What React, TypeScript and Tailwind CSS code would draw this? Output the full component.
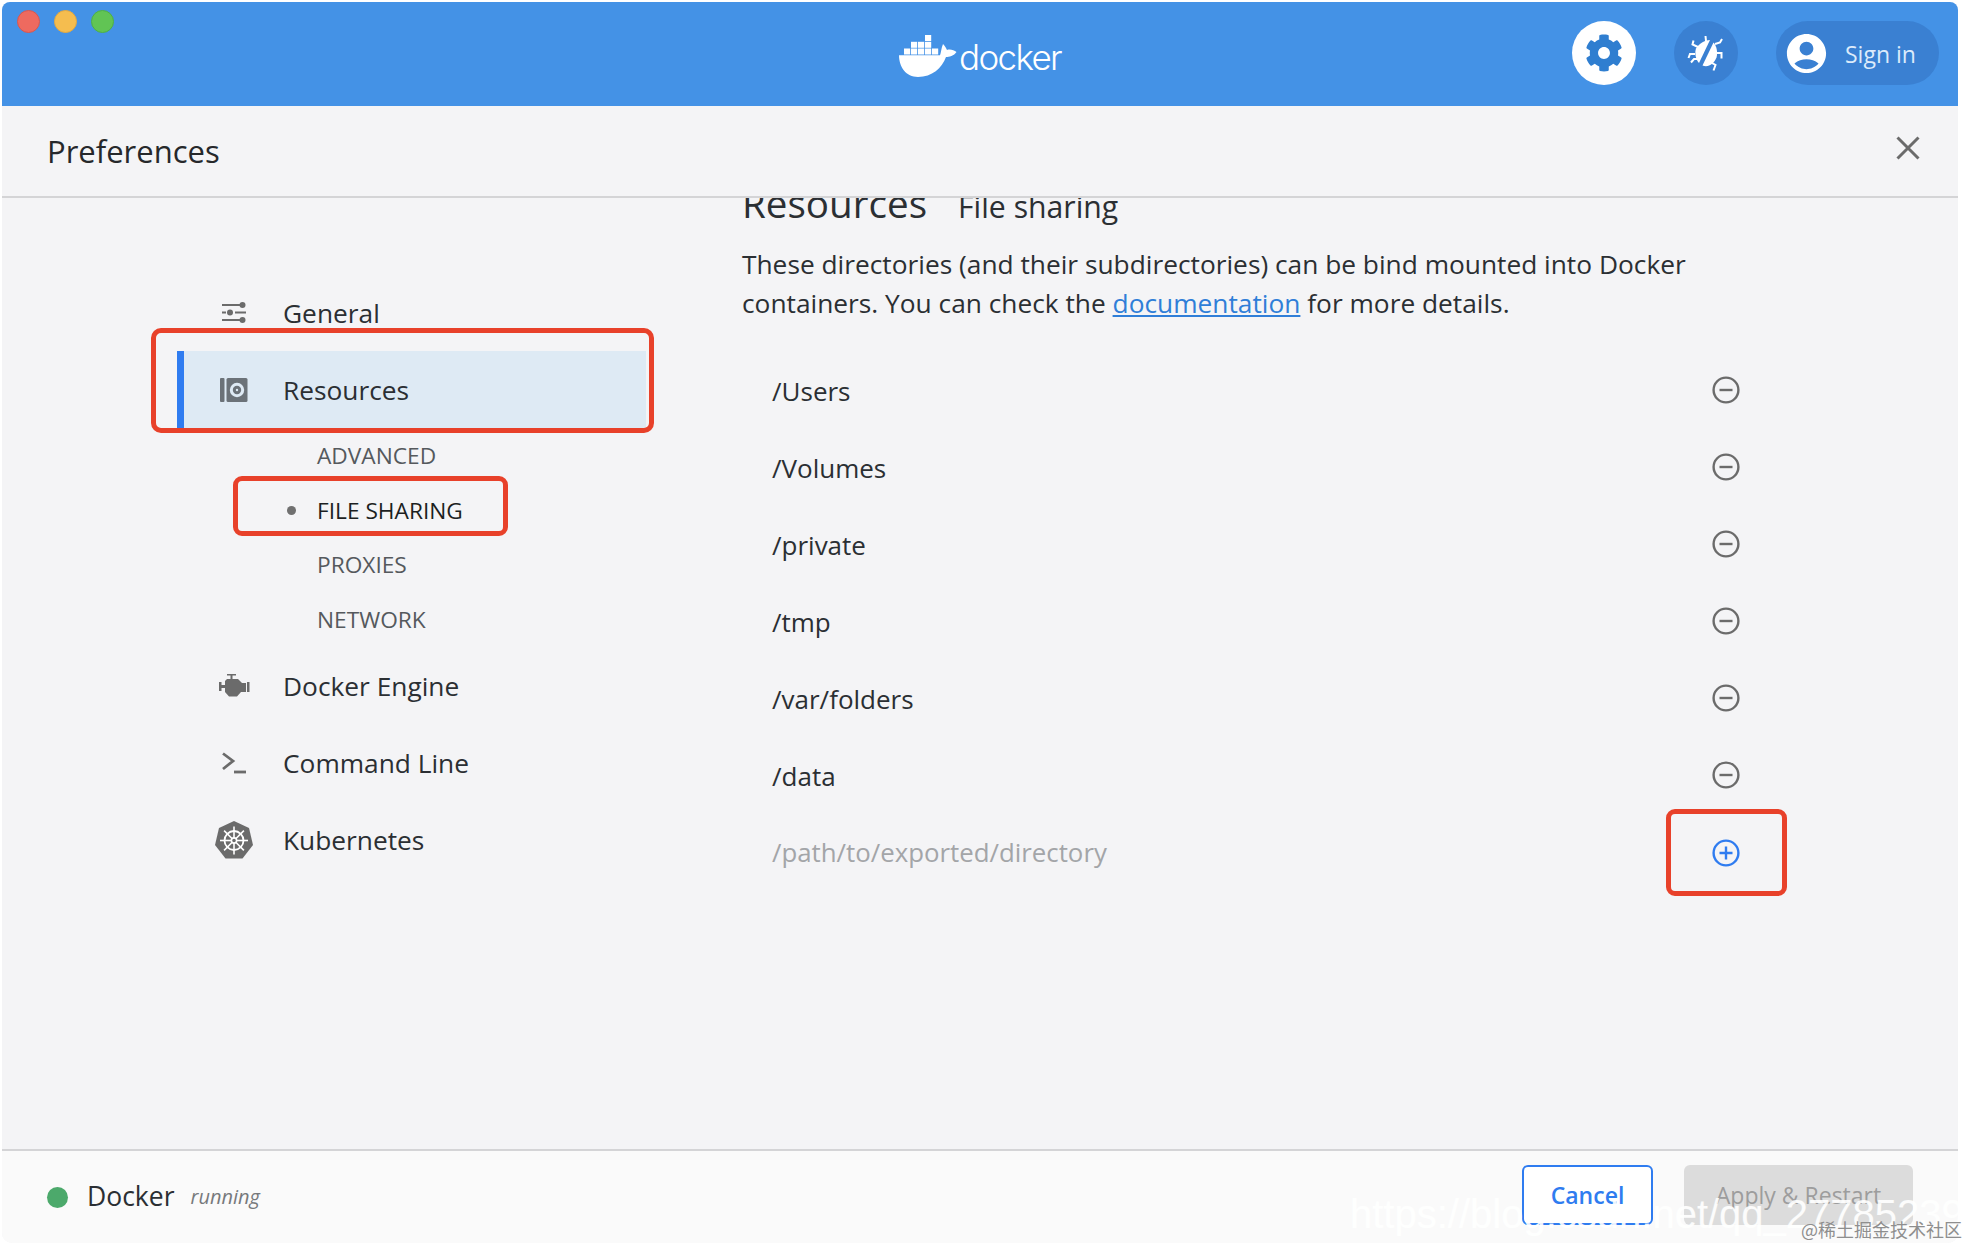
import { FaCog } from 'react-icons/fa'
import { MdAccountCircle } from 'react-icons/md'

const paths = ['/Users', '/Volumes', '/private', '/tmp', '/var/folders', '/data']

function Whale() {
  const blocks = [
    [27, 0],
    [13, 6.8],
    [20, 6.8],
    [27, 6.8],
    [6, 13.5],
    [13, 13.5],
    [20, 13.5],
    [27, 13.5],
    [34, 13.5],
  ]
  return (
    <svg className="w-[59px] h-[42px]" viewBox="0 0 59 42" fill="#fff">
      {blocks.map(([x, y]) => (
        <rect key={`${x}-${y}`} x={x} y={y} width="6.2" height="6" />
      ))}
      <path d="M1 20.3H42C43 18 43 14 45 9C47 11 48 13 49 15C52 14 56 15 58.5 17C56 21 51 22 48 22C44 33 34 42 20 42C8 42 1 32 1 20.3Z" />
    </svg>
  )
}

function BugIcon() {
  return (
    <svg className="w-[40px] h-[40px]" viewBox="0 0 40 40" fill="#fff" stroke="none">
      <path d="M24 7L13 30C9.5 26 8.5 20 10 15.5C13 10.5 18.5 7.5 24 7Z" />
      <path d="M27.5 9.5L16.5 32.5C22 35 28 31 30.5 24.5C32 19 30.5 13 27.5 9.5Z" />
      <path
        d="M20 8L19.5 3M12 14L6.5 11.5L7.5 7.5M9 21L4 21L2.5 25M12 26L8 26L5 29.5M29 11L34 9.5L36 6M31 20L35.5 20L35.5 25.5M26 30L29.5 32L27.5 37.5"
        fill="none"
        stroke="#fff"
        strokeWidth="2"
      />
    </svg>
  )
}

function SlidersIcon() {
  return (
    <svg className="w-[26px] h-[23px]" viewBox="0 0 26 23" fill="#6b6b6b" stroke="#6b6b6b" strokeWidth="2">
      <path d="M1 4H19M1 11.5H5M14 11.5H25M1 19H19" fill="none" />
      <circle cx="21.5" cy="4" r="3" stroke="none" />
      <circle cx="9" cy="11.5" r="3" stroke="none" />
      <circle cx="21.5" cy="19" r="3" stroke="none" />
    </svg>
  )
}

function DiskIcon() {
  return (
    <svg className="w-[28px] h-[24px]" viewBox="0 0 28 24">
      <rect x="0" y="0" width="4.5" height="24" rx="1" fill="#6b7278" />
      <rect x="6.5" y="0" width="21" height="24" rx="1.5" fill="#6b7278" />
      <circle cx="17" cy="12" r="7.2" fill="#deeaf4" />
      <circle cx="17" cy="12" r="4.2" fill="#6b7278" />
      <circle cx="17" cy="12" r="1.2" fill="#deeaf4" />
    </svg>
  )
}

function EngineIcon() {
  return (
    <svg className="w-[31px] h-[23px]" viewBox="0 0 31 23" fill="#6b6b6b">
      <path d="M8 0H17V1.6H13.5V5H19L23 9H27V18H22L18 22.5H10L6 18V14H2.5V17H0V8H2.5V11H6V7L8 5H11.5V1.6H8Z" />
      <rect x="28" y="8" width="2.5" height="10" />
    </svg>
  )
}

function PromptIcon() {
  return (
    <svg className="w-[24px] h-[22px]" viewBox="0 0 24 22" fill="none" stroke="#6b6b6b" strokeWidth="2.8">
      <path d="M1 1.5L11 9L1 17" />
      <path d="M12 20H24" />
    </svg>
  )
}

function KubeIcon() {
  const spokes = [0, 45, 90, 135, 180, 225, 270, 315]
  return (
    <svg className="w-[40px] h-[38px]" viewBox="0 0 40 38">
      <path d="M20 0L35 7L39 24L28.5 37.5H11.5L1 24L5 7Z" fill="#6b6b6b" />
      <g fill="none" stroke="#fff">
        <circle cx="20" cy="19.5" r="9.5" strokeWidth="1.8" />
        <circle cx="20" cy="19.5" r="2.6" strokeWidth="1.6" />
        {spokes.map((a) => (
          <path key={a} d="M20 17V5.5" strokeWidth="1.6" transform={`rotate(${a} 20 19.5)`} />
        ))}
      </g>
    </svg>
  )
}

function SideItem({ icon, label }: { icon: React.ReactNode; label: string }) {
  return (
    <div className="h-[77px] flex items-center">
      <div className="w-[40px] ml-[212px] flex justify-center">{icon}</div>
      <span className="ml-[29px] pt-[2px] text-[26.3px] text-[#2b2f33]">{label}</span>
    </div>
  )
}

function SubItem({ label, active }: { label: string; active?: boolean }) {
  return (
    <div className="h-[54.5px] flex items-center pl-[315px] relative">
      {active && <span className="absolute left-[285px] w-[9px] h-[9px] rounded-full bg-[#707070]" />}
      <span className={`text-[22.7px] ${active ? 'text-[#1c1f22]' : 'text-[#55595d]'}`}>{label}</span>
    </div>
  )
}

export default function App() {
  return (
    <div className="w-[1968px] h-[1246px] bg-white font-['Open_Sans',sans-serif] overflow-hidden relative">
      <div className="ml-[2px] mt-[2px] w-[1956px] h-[1241px] flex flex-col rounded-t-[8px] rounded-b-[10px] overflow-hidden bg-[#f4f4f6]">
        <header className="h-[104px] shrink-0 bg-[#4492e6] grid grid-cols-[1fr_auto_1fr] items-center">
          <div className="flex gap-[14px] pl-[15px] self-start pt-[8px]">
            <span className="w-[23px] h-[23px] rounded-full bg-[#ee6a5f] border border-[#d9564e]" />
            <span className="w-[23px] h-[23px] rounded-full bg-[#f5bd4f] border border-[#e6a93d]" />
            <span className="w-[23px] h-[23px] rounded-full bg-[#61c454] border border-[#4fb044]" />
          </div>
          <div className="flex items-end gap-[2px] pt-[4px] pr-[1px]">
            <Whale />
            <span className="text-[35px] leading-[40px] text-white font-['Inter',sans-serif] font-light tracking-[-1.7px]">docker</span>
          </div>
          <div className="flex items-center justify-end gap-[38px] pr-[19px] pb-[2px]">
            <div className="w-[64px] h-[64px] rounded-full bg-white flex items-center justify-center">
              <FaCog className="w-[38px] h-[38px] text-[#2f7ed0]" />
            </div>
            <div className="w-[64px] h-[64px] rounded-full bg-[#3a80d2] flex items-center justify-center">
              <BugIcon />
            </div>
            <div className="w-[163px] h-[64px] rounded-full bg-[#3a80d2] flex items-center pl-[7px] gap-[15px]">
              <MdAccountCircle className="w-[47px] h-[47px] text-white" />
              <span className="pt-[2px] text-[23px] text-[#dcebfb]">Sign in</span>
            </div>
          </div>
        </header>

        <div className="h-[92px] shrink-0 border-b-2 border-[#d4d4d6] flex items-center justify-between pl-[45px] pr-[38px]">
          <h1 className="text-[31px] font-medium text-[#26282b]">Preferences</h1>
          <svg className="w-[24px] h-[24px] mb-[6px]" viewBox="0 0 24 24" stroke="#6b6b6b" strokeWidth="3" fill="none">
            <path d="M1.5 1.5L22.5 22.5M22.5 1.5L1.5 22.5" />
          </svg>
        </div>

        <main className="flex-1 flex overflow-hidden">
          <nav className="w-[740px] shrink-0 pt-[76px] relative">
            <SideItem icon={<SlidersIcon />} label="General" />
            <div className="h-[77px] ml-[175px] w-[469px] bg-[#deeaf4] border-l-[7px] border-[#2f7cf0] flex items-center relative">
              <div className="w-[40px] ml-[30px] flex justify-center">
                <DiskIcon />
              </div>
              <span className="ml-[29px] pt-[2px] text-[26.3px] text-[#2b2f33]">Resources</span>
              <div className="absolute -left-[33px] -top-[23px] w-[503px] h-[105px] border-[5px] border-[#e8412a] rounded-[10px]" />
            </div>
            <div className="pt-[1px]">
              <SubItem label="ADVANCED" />
              <div className="relative">
                <SubItem label="FILE SHARING" active />
                <div className="absolute left-[231px] top-[-8px] w-[275px] h-[60px] border-[5px] border-[#e8412a] rounded-[9px]" />
              </div>
              <SubItem label="PROXIES" />
              <SubItem label="NETWORK" />
            </div>
            <SideItem icon={<EngineIcon />} label="Docker Engine" />
            <SideItem icon={<PromptIcon />} label="Command Line" />
            <SideItem icon={<KubeIcon />} label="Kubernetes" />
          </nav>

          <section className="flex-1 -mt-[11px]">
            <div className="flex items-baseline gap-[31px] h-[32px]">
              <h2 className="text-[38.6px] leading-[32px] text-[#2b2f33]">Resources</h2>
              <span className="text-[30.2px] leading-[32px] text-[#2b2f33]">File sharing</span>
            </div>
            <p className="mt-[26px] w-[980px] text-[26.3px] leading-[39px] text-[#2b2f33]">
              These directories (and their subdirectories) can be bind mounted into Docker containers. You can check the{' '}
              <span className="text-[#2f7ed8] underline">documentation</span> for more details.
            </p>
            <div className="mt-[28px] w-[998px]">
              {paths.map((p) => (
                <div key={p} className="h-[77px] flex items-center justify-between pl-[30px]">
                  <span className="pt-[4px] text-[26px] text-[#2b2f33]">{p}</span>
                  <svg className="w-[28px] h-[28px]" viewBox="0 0 28 28" fill="none" stroke="#6b6b6b" strokeWidth="2.4">
                    <circle cx="14" cy="14" r="12.4" />
                    <path d="M7.5 14H20.5" />
                  </svg>
                </div>
              ))}
              <div className="h-[77px] mt-[1px] flex items-center justify-between pl-[30px] relative">
                <span className="text-[25.8px] text-[#a3a5a8]">/path/to/exported/directory</span>
                <svg className="w-[28px] h-[28px]" viewBox="0 0 28 28" fill="none" stroke="#2f7cf0" strokeWidth="2.4">
                  <circle cx="14" cy="14" r="12.4" />
                  <path d="M7.5 14H20.5M14 7.5V20.5" />
                </svg>
                <div className="absolute -right-[47px] top-[-5px] w-[121px] h-[87px] border-[5px] border-[#e8412a] rounded-[9px]" />
              </div>
            </div>
          </section>
        </main>

        <footer className="h-[94px] shrink-0 border-t-2 border-[#d4d4d6] bg-[#fafafa] flex items-center justify-between pl-[45px] pr-[45px]">
          <div className="flex items-center">
            <span className="w-[21px] h-[21px] rounded-full bg-[#4ca96b]" />
            <span className="ml-[19px] text-[26.5px] text-[#2b2f33]">Docker</span>
            <span className="ml-[16px] text-[20px] italic text-[#77797c]">running</span>
          </div>
          <div className="flex items-center gap-[31px] pb-[4px]">
            <div className="w-[131px] h-[60px] rounded-[6px] border-2 border-[#2f7cf0] bg-white flex items-center justify-center text-[23px] font-semibold text-[#2f7cf0]">
              Cancel
            </div>
            <div className="w-[229px] h-[60px] rounded-[6px] bg-[#dcdcdc] flex items-center justify-center text-[23px] text-[#9d9d9d]">
              Apply &amp; Restart
            </div>
          </div>
        </footer>
      </div>

      <div className="absolute left-[1350px] top-[1189px] text-[40px] leading-[50px] text-white/90 font-['Liberation_Sans',sans-serif] whitespace-nowrap font-light">
        https://blog.csdn.net/qq_27785239
      </div>
      <div className="absolute right-[6px] top-[1217px] text-[18px] leading-[24px] text-[#8e8e8e] font-['Noto_Sans_CJK_SC',sans-serif] whitespace-nowrap">
        @稀土掘金技术社区
      </div>
    </div>
  )
}
